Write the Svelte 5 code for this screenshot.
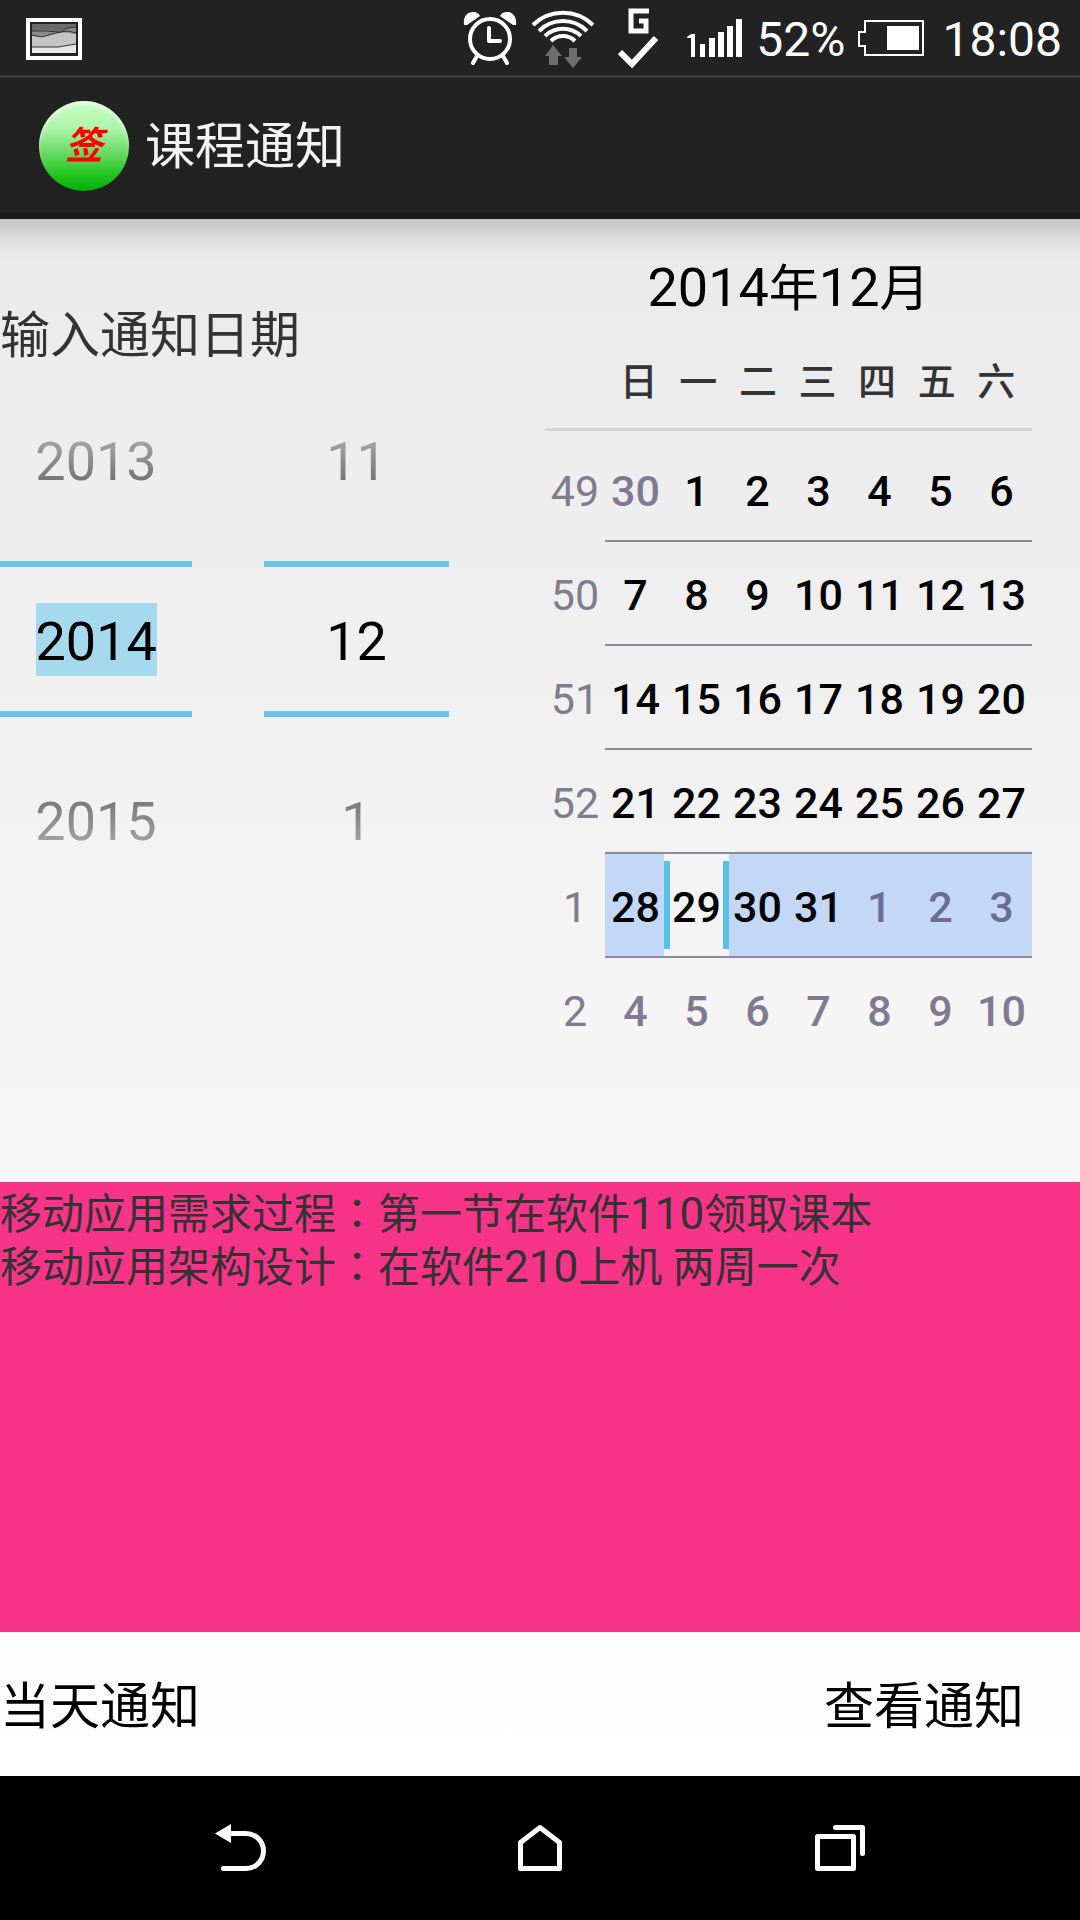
<script>
  const years = ['2013', '2014', '2015'];
  const months = ['11', '12', '1'];
  const weekdays = ['日', '一', '二', '三', '四', '五', '六'];
  const weeks = [
    { no: 49, days: [30, 1, 2, 3, 4, 5, 6] },
    { no: 50, days: [7, 8, 9, 10, 11, 12, 13] },
    { no: 51, days: [14, 15, 16, 17, 18, 19, 20] },
    { no: 52, days: [21, 22, 23, 24, 25, 26, 27] },
    { no: 1, days: [28, 29, 30, 31, 1, 2, 3] },
    { no: 2, days: [4, 5, 6, 7, 8, 9, 10] }
  ];
  const isOther = (w, d) => (w === 0 && d > 20) || (w === 4 && d < 10) || w === 5;
  const isSelected = (w, d) => w === 4 && d === 29;
</script>

<div class="screen">
  <header class="status">
    <svg class="shot" width="56" height="42" viewBox="0 0 56 42" aria-hidden="true">
      <rect x="2" y="2" width="52" height="38" fill="#222" stroke="#fff" stroke-width="4" />
      <rect x="6" y="6" width="44" height="29" fill="#8a8a8a" />
      <path d="M6 6h44v3l-8 1-8 3-14-1-14 1z" fill="#6a6a6a" />
      <path d="M6 18l10 1 20-5 14 2v12l-16 3-28-1z" fill="#c4c4c4" />
      <path d="M6 29h26l18-3v9H6z" fill="#e6e6e6" />
      <path d="M6 13l14 0 14 1 8-4 8-1M6 17l10 2 14-4 12-2 8 2M6 29h26l18-3" fill="none" stroke="#333" stroke-width="1" />
      <rect x="5" y="5" width="46" height="31" fill="none" stroke="#222" stroke-width="2" />
    </svg>
    <div class="tray">
      <svg width="54" height="54" viewBox="0 0 54 54" aria-hidden="true">
        <g fill="none" stroke="#fff" stroke-width="4">
          <circle cx="27" cy="28" r="20" />
          <path d="M26 17v13h11" stroke-linecap="round" stroke-linejoin="round" />
          <path d="M14 45l-4 7M40 45l4 7" stroke-linecap="round" />
        </g>
        <path d="M1 14C0 6 4 1 10 1c4 0 6 2 7 4L4 14z M53 14c1-8-3-13-9-13-4 0-6 2-7 4l13 9z" fill="#fff" />
      </svg>
      <svg class="wifi" width="64" height="62" viewBox="0 0 64 62" aria-hidden="true">
        <g fill="none" stroke="#fff" stroke-width="4">
          <path d="M2 18a43 43 0 0 1 60 0" />
          <path d="M8 24a34 34 0 0 1 48 0" />
          <path d="M14 29a26 26 0 0 1 36 0" />
          <path d="M20 34a17 17 0 0 1 24 0" />
        </g>
        <path d="M22 38l9 11h-4v9h-9v-9h-4zM42 61l-9-11h5v-9h8v9h5z" fill="#6e6e6e" />
      </svg>
      <svg class="sync" width="40" height="60" viewBox="0 0 40 60" aria-hidden="true">
        <path d="M31 3H13v20h15V13h-7" fill="none" stroke="#fff" stroke-width="5" />
        <path d="M2 44l12 12 24-26" fill="none" stroke="#fff" stroke-width="6" />
      </svg>
      <svg class="signal" width="56" height="40" viewBox="0 0 56 40" aria-hidden="true">
        <path d="M1 19l4-3h4v23H5V20H1zM14 26h5v13h-5zM23 20h6v19h-6zM32 14h6v25h-6zM41 8h6v31h-6zM50 1h6v38h-6z" fill="#fff" />
      </svg>
      <span class="sys">52%</span>
      <svg class="battery" width="68" height="38" viewBox="0 0 68 38" aria-hidden="true">
        <path d="M8 2h58v34H8v-9H2V13h6z" fill="none" stroke="#fff" stroke-width="2" />
        <rect x="30" y="7" width="32" height="24" fill="#fff" />
      </svg>
      <time class="sys">18:08</time>
    </div>
  </header>

  <div class="appbar">
    <div class="logo"><span>签</span></div>
    <h1>课程通知</h1>
  </div>

  <main>
    <section class="top">
      <div class="entry">
        <h2>输入通知日期</h2>
        <div class="pickers">
          <div class="picker year">
            <button class="near above">{years[0]}</button>
            <div class="current"><input aria-label="年" value={years[1]} class="picked" /></div>
            <button class="near below">{years[2]}</button>
          </div>
          <div class="picker month">
            <button class="near above">{months[0]}</button>
            <div class="current"><input aria-label="月" value={months[1]} /></div>
            <button class="near below">{months[2]}</button>
          </div>
        </div>
      </div>

      <div class="calendar">
        <h2 class="caption">2014<span>年</span>12<span>月</span></h2>
        <div class="names">
          {#each weekdays as name}<span>{name}</span>{/each}
        </div>
        <table>
          <tbody>
            {#each weeks as week, w}
              <tr>
                <th scope="row">{week.no}</th>
                {#each week.days as day}
                  <td class:active={w === 4} class:selected={isSelected(w, day)}>
                    <button class:other={isOther(w, day)}>{day}</button>
                  </td>
                {/each}
              </tr>
            {/each}
          </tbody>
        </table>
      </div>
    </section>

    <section class="notes">
      <p>移动应用需求过程<i>：</i>第一节在软件<b>110</b>领取课本</p>
      <p>移动应用架构设计<i>：</i>在软件<b>210</b>上机 两周一次</p>
    </section>

    <div class="actions">
      <button>当天通知</button>
      <button>查看通知</button>
    </div>
  </main>

  <nav>
    <button aria-label="返回">
      <svg width="54" height="54" viewBox="0 0 54 54" aria-hidden="true">
        <path d="M2 12.500L18 3v19z" fill="#fff" />
        <path d="M16 12.500h17a17 17 0 0 1 0 35H10.500" fill="none" stroke="#fff" stroke-width="5" stroke-linecap="round" />
      </svg>
    </button>
    <button aria-label="主页">
      <svg width="54" height="54" viewBox="0 0 54 54" aria-hidden="true">
        <path d="M7.500 21.500L27 6.500l19.500 15v26h-39z" fill="none" stroke="#fff" stroke-width="5" stroke-linejoin="round" />
      </svg>
    </button>
    <button aria-label="最近任务">
      <svg width="54" height="54" viewBox="0 0 54 54" aria-hidden="true">
        <path d="M4.500 15.500h36v32h-36z" fill="none" stroke="#fff" stroke-width="5" stroke-linejoin="round" />
        <path d="M22.500 6.500h27v26" fill="none" stroke="#fff" stroke-width="5" stroke-linecap="round" stroke-linejoin="round" />
      </svg>
    </button>
  </nav>
</div>

<style>
  :global(body) {
    margin: 0;
  }
  .screen {
    display: flex;
    flex-direction: column;
    min-height: 100vh;
    font-family: Roboto, 'Noto Sans CJK SC', sans-serif;
    color: #333;
  }
  .screen * {
    box-sizing: border-box;
  }
  h1,
  h2,
  p {
    margin: 0;
    font-weight: 400;
  }
  button,
  input {
    padding: 0;
    border: 0;
    background: none;
    font: inherit;
    color: inherit;
  }
  svg {
    display: block;
    flex: none;
  }

  .status {
    display: flex;
    align-items: center;
    justify-content: space-between;
    height: 78px;
    padding: 0 18px 0 26px;
    background: #222;
    border-bottom: 3px solid #3a3a3a;
    color: #fff;
  }
  .shot {
    margin-top: 3px;
  }
  .tray {
    display: flex;
    align-items: center;
  }
  .wifi {
    margin-left: 14px;
  }
  .sync {
    margin-left: 23px;
  }
  .signal {
    margin: 0 14px 0 28px;
  }
  .sys {
    padding-top: 4px;
    font-size: 48px;
    line-height: 71px;
  }
  .battery {
    margin: 0 17px 0 12px;
  }

  .appbar {
    display: flex;
    align-items: center;
    gap: 16px;
    height: 141px;
    padding: 0 39px;
    background: #222;
    border-bottom: 6px solid #1b1b1b;
    color: #f3f3f3;
  }
  .logo {
    display: grid;
    place-items: center;
    width: 90px;
    height: 90px;
    border-radius: 50%;
    background: linear-gradient(#c8ffc4, #aef5aa 30%, #6fdc6c 55%, #22c41e 82%, #07ae05);
    box-shadow: inset 0 4px 3px rgba(255, 255, 255, 0.5);
    color: #f00;
    font-size: 38px;
    line-height: 38px;
    font-weight: 700;
    font-style: italic;
  }
  h1 {
    padding-top: 2px;
    font-size: 50px;
    line-height: 64px;
  }

  main {
    flex: 1;
    display: flex;
    flex-direction: column;
    background:
      linear-gradient(rgba(0, 0, 0, 0.17), rgba(0, 0, 0, 0.05) 50%, transparent) top / 100% 40px no-repeat,
      linear-gradient(#eaeaea, #fff);
  }
  .top {
    display: flex;
    justify-content: space-between;
    min-height: 963px;
    padding-right: 48px;
  }
  .entry {
    width: 450px;
    padding-top: 85px;
  }
  .entry h2 {
    font-size: 50px;
    line-height: 64px;
  }
  .pickers {
    display: flex;
    gap: 72px;
    padding-top: 13px;
  }
  .picker {
    display: flex;
    flex-direction: column;
    font-size: 54px;
    line-height: 72px;
    text-align: center;
  }
  .year {
    width: 192px;
  }
  .month {
    width: 185px;
  }
  .near {
    height: 180px;
    background-clip: text;
    color: transparent;
  }
  .above {
    padding-bottom: 18px;
    background-image: linear-gradient(#b5b5b5 25%, #666 62%);
  }
  .below {
    padding-top: 30px;
    background-image: linear-gradient(#6a6a6a 38%, #b0b0b0 78%);
  }
  .current {
    display: flex;
    align-items: center;
    justify-content: center;
    height: 156px;
    border: solid #6ac5e8;
    border-width: 6px 0;
    color: #000;
  }
  .current input {
    width: 121px;
    height: 73px;
    padding-top: 4px;
    text-align: center;
  }
  .current .picked {
    background: #a5d9ed;
  }

  .calendar {
    width: 487px;
    padding-top: 37px;
  }
  .caption {
    font-size: 54px;
    line-height: 64px;
    color: #000;
    text-align: center;
  }
  .caption span {
    font-size: 50px;
  }
  .names {
    display: flex;
    height: 110px;
    padding: 33px 6px 0 64px;
    border-bottom: 3px solid #d5d5d5;
    font-size: 38px;
    line-height: 56px;
    font-weight: 500;
  }
  .names span {
    flex: 1;
    text-align: center;
  }
  table {
    width: 100%;
    margin-top: 7px;
    border-collapse: separate;
    border-spacing: 0;
    table-layout: fixed;
    font-size: 43px;
    line-height: 60px;
  }
  th,
  td {
    height: 104px;
    padding: 0;
    text-align: center;
  }
  th {
    width: 60px;
    padding-top: 2px;
    font-weight: 400;
    color: #807b8f;
  }
  td {
    border-bottom: 2px solid #8b869b;
  }
  tr:last-child td {
    border-bottom-color: transparent;
  }
  td button {
    display: block;
    width: 100%;
    height: 100%;
    padding-top: 4px;
    font-weight: 500;
    color: #000;
  }
  td .other {
    color: #7f7a91;
  }
  .active {
    background: #c3d7f6;
  }
  .active .other {
    color: #6a6d94;
  }
  .selected {
    position: relative;
  }
  .selected button {
    position: relative;
  }
  /* Marker bars overlap the neighbouring days slightly. */
  .selected::before {
    content: '';
    position: absolute;
    inset: 0 -2px 0 -2px;
    background:
      linear-gradient(#57c1e8, #57c1e8) left / 6px 88px no-repeat,
      linear-gradient(#57c1e8, #57c1e8) right / 6px 88px no-repeat,
      #f4f4f4;
  }

  .notes {
    min-height: 450px;
    padding-top: 6px;
    background: #f73487;
    font-size: 42px;
    line-height: 53px;
  }
  /* The Traditional face centres the full-width colon in its cell. */
  .notes i {
    font-family: Roboto, 'Noto Sans CJK TC', sans-serif;
    font-style: normal;
  }
  .notes b {
    font-size: 44px;
    line-height: 44px;
    font-weight: 400;
  }
  .actions {
    flex: 1;
    display: flex;
    align-items: center;
    justify-content: space-between;
    min-height: 144px;
    padding: 0 56px 4px 0;
    font-size: 50px;
    color: #000;
  }

  nav {
    display: flex;
    justify-content: center;
    height: 144px;
    background: #000;
  }
  nav button {
    display: grid;
    place-items: center;
    width: 300px;
  }
</style>
